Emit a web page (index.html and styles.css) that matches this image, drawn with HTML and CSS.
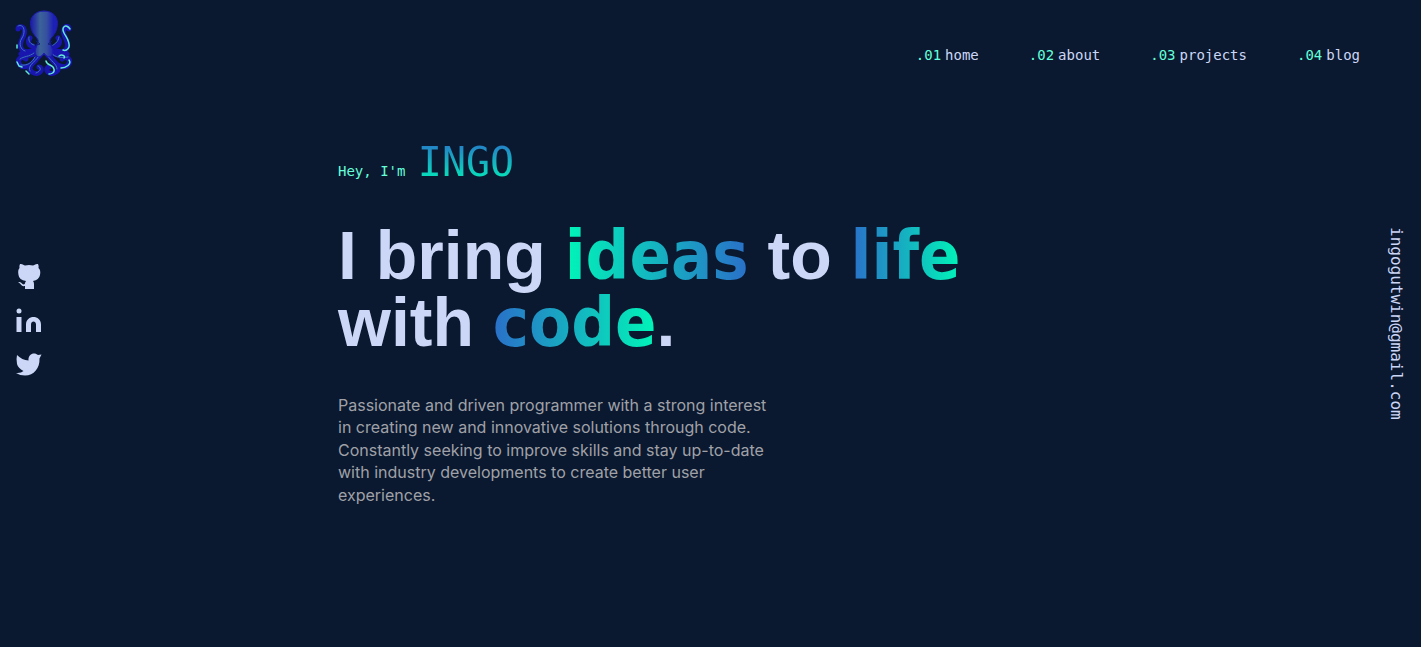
FILE: index.html
```html
<!DOCTYPE html>
<html lang="en">
<head>
<meta charset="utf-8">
<meta name="viewport" content="width=device-width, initial-scale=1">
<title>Ingo</title>
<link rel="stylesheet" href="styles.css">
</head>
<body>
<header class="header">
  <a class="logo" href="#" aria-label="Home">
    <svg width="58" height="68" viewBox="0 0 58 68" fill="none" stroke-linecap="round" stroke-linejoin="round">
      <defs><linearGradient id="skin" x1="0" x2="1"><stop stop-color="#1c1ba8"/><stop offset=".2" stop-color="#2c3fa0"/><stop offset=".35" stop-color="#3b6399"/><stop offset=".6" stop-color="#35509f"/><stop offset=".85" stop-color="#1d20b5"/></linearGradient></defs>
      <g stroke="#1916b0" stroke-width="5">
        <path d="M24 36C20 42 8 44 6 38C3 31 12 25 9 19C7 15 3 17 3 19"/>
        <path d="M34 36C38 42 50 44 52 38C55 31 46 25 49 19C51 15 54 16 54 19"/>
        <path d="M23 40C18 47 9 46 6 44M35 40C40 47 49 46 52 44"/>
        <path d="M24 44C20 56 8 59 5 55C1 50 6 45 11 49"/>
        <path d="M34 44C38 56 50 59 53 55C57 50 52 45 47 49"/>
        <path d="M27 43C21 50 10 58 17 62C25 67 29 58 24 57"/>
        <path d="M31 43C37 50 48 58 41 62C33 67 29 58 34 57"/>
        <path d="M18 36C14 36 12 32 15 28M40 36C44 36 46 32 43 28"/>
      </g>
      <g stroke="#3b74b4" stroke-width="1">
        <path d="M3 16C9 13 11 22 7 28C3 34 6 40 10 41"/>
        <path d="M14 27C13 32 16 34 19 35M5 49C9 46 14 47 19 43M6 55C12 56 17 53 20 47M15 61C12 56 19 53 24 46M21 63C27 61 26 57 23 56"/>
        <path d="M44 27C43 33 39 34 37 36M36 43C41 48 46 48 53 47M32 45C36 51 42 54 42 59"/>
      </g>
      <g stroke="#63e8d8" stroke-width="1.500">
        <path d="M55 19C51 13 46 17 49 23C51 27 55 31 54 37C53 40 50 41 48 40"/>
        <path d="M2 35V38M44 46C47 44 51 46 49 48M46 58C51 58 57 54 54 50M31 51C32 56 38 54 39 59C40 63 36 64 34 64M2 52L4 56L7 57M11 61L14 64"/>
      </g>
      <path d="M29 1C19 1 14 8 16 17C17 24 21 26 23 30C24 34 18 40 21 45C24 49 28 45 29 43C30 45 34 49 37 45C40 40 34 34 35 30C37 26 41 24 42 17C44 8 39 1 29 1Z" fill="url(#skin)" stroke="#1d1cae"/>
      <path d="M21 31L25 34L21 35M37 31L33 34L37 35" stroke="#111f78"/>
    </svg>
  </a>
  <nav class="nav">
    <a href="#home"><span>.01</span>home</a>
    <a href="#about"><span>.02</span>about</a>
    <a href="#projects"><span>.03</span>projects</a>
    <a href="#blog"><span>.04</span>blog</a>
  </nav>
</header>
<div class="body">
  <aside class="social">
    <a href="#" aria-label="GitHub"><svg width="26" height="26" viewBox="0 0 26 26"><path d="M4 1C6 .5 8 2 9 2.500Q13 1.500 17 2.500C18 2 20 .5 22 1Q23 3 22.500 5Q25 7 24 12Q23 17 17 18Q18 19 18 21V26H9V23C5 24 5 20 2 19.500Q4 18 6.500 21Q8 22 9 20.500Q9 19 10 18Q3 17 2.500 12Q1.500 7 3.500 5Q3 3 4 1Z"/></svg></a>
    <a href="#" aria-label="LinkedIn"><svg width="26" height="26" viewBox="0 0 26 26"><circle cx="3" cy="4" r="2.500"/><path d="M.5 10H5.500V25H.5ZM10 25V17.500C10 7.500 25 7.500 25 17.500V25H20V17.500C20 13.500 15 13.500 15 17.500V25Z"/></svg></a>
    <a href="#" aria-label="Twitter"><svg width="26" height="26" viewBox="0 0 26 26"><path d="M1 4Q6 9 12.500 9.500C12 2 19 1 22 4L25.500 3.500L23.500 7.500C24 17 18 24.500 9 24.500Q4 24.500 0 22Q5 22.500 7.500 20Q2 17 1 13Q0 8 1 4Z"/></svg></a>
  </aside>
  <main class="hero">
    <p class="hello">Hey, I'm <span class="name">INGO</span></p>
    <h1 class="title">I bring <span class="word word-back">ideas</span> to <span class="word">life</span><br>with <span class="word">code</span>.</h1>
    <p class="intro">Passionate and driven programmer with a strong interest in creating new and innovative solutions through code. Constantly seeking to improve skills and stay up-to-date with industry developments to create better user experiences.</p>
  </main>
  <aside class="contact"><a href="mailto:ingogutwin@gmail.com">ingogutwin@gmail.com</a></aside>
</div>
</body>
</html>
```
FILE: styles.css
```css
* { box-sizing: border-box; }
body {
  margin: 0;
  min-height: 100vh;
  display: flex;
  flex-direction: column;
  background: #0a192f;
  color: #ccd6f6;
  font-family: "Liberation Sans", sans-serif;
}
a { color: inherit; text-decoration: none; }
svg { display: block; }
.header {
  display: flex;
  justify-content: space-between;
  align-items: flex-start;
  padding: 10px 61px 0 15px;
}
.nav {
  display: flex;
  gap: 50px;
  padding-top: 36px;
  font: 14px/18px "DejaVu Sans Mono", monospace;
}
.nav span { color: #64ffda; margin-right: 4px; }
.body {
  flex: 1;
  display: grid;
  grid-template-columns: 338px minmax(0, 1fr) auto;
}
.social {
  display: flex;
  flex-direction: column;
  gap: 18px;
  padding: 185px 0 0 16px;
}
.social a { width: 26px; }
.social svg { fill: #ccd6f6; }
.hero { padding-top: 61px; }
.hello {
  margin: 0;
  color: #64ffda;
  font: 14px/46px "DejaVu Sans Mono", monospace;
}
.name {
  margin-left: 4px;
  font-size: 40px;
  background: linear-gradient(180deg, #2a6fc9, #00f5b8);
  background-clip: text;
  color: transparent;
}
.title {
  margin: 28px 0 0;
  font: 700 68px/67px "Liberation Sans", sans-serif;
}
.word {
  font-family: "DejaVu Sans Condensed", "DejaVu Sans", sans-serif;
  line-height: 60px;
  background: linear-gradient(90deg, #2a6fc9, #00f5b8);
  background-clip: text;
  color: transparent;
}
.word-back { background-image: linear-gradient(270deg, #2a6fc9, #00f5b8); }
.intro {
  max-width: 440px;
  margin: 38px 0 0;
  color: #a0a1a8;
  font: 16px/1.4 Inter, sans-serif;
}
.contact {
  padding: 149px 15px 0 0;
  font: 16px/20px "DejaVu Sans Mono", monospace;
  writing-mode: vertical-rl;
}
```
